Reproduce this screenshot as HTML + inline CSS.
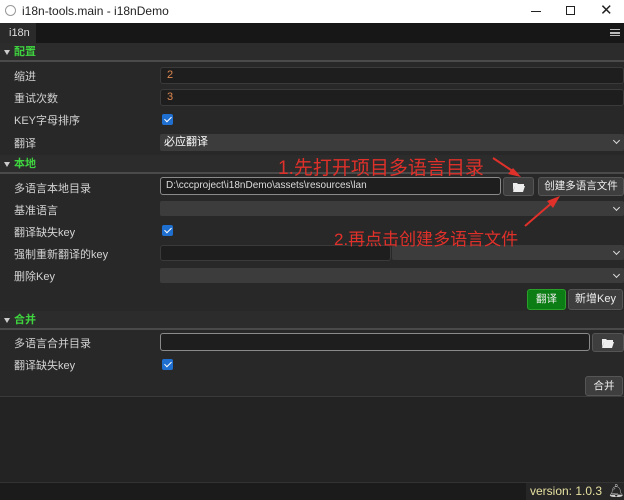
<!DOCTYPE html>
<html><head><meta charset="utf-8"><style>
*{box-sizing:border-box;margin:0;padding:0}
body{width:624px;height:500px;overflow:hidden;background:#282828;font-family:"Liberation Sans","Noto Sans CJK SC",sans-serif;font-size:11px;color:#cfcfcf;position:relative}
.a{position:absolute}
.title{left:0;top:0;width:624px;height:23px;background:#fff;color:#222;font-size:12px}
.tabbar{left:0;top:23px;width:624px;height:20px;background:#171717}
.hdr{left:0;width:624px;height:19px;background:#2c2c2c;border-bottom:2px solid #4a4a4a;color:#3fd43f;font-weight:bold;font-size:11px;padding-left:14px;line-height:18px}
.hdr:before{content:"";position:absolute;left:4px;top:7px;border-left:3px solid transparent;border-right:3px solid transparent;border-top:5px solid #ccc}
.lbl{left:14px;font-size:11px;color:#d2d2d2}
.inp{background:#1e1e1e;border:1px solid #3a3a3a;border-radius:3px;color:#e08850;font-size:11px;padding-left:6px;line-height:15px}
.sel{background:#3c3c3c;border-radius:2px;color:#fff}
.sel:after{content:"";position:absolute;right:5px;top:4px;width:4px;height:4px;border-right:1.5px solid #ddd;border-bottom:1.5px solid #ddd;transform:rotate(45deg)}
.cb{width:11px;height:11px;background:#1e6fd0;border-radius:2px}
.cb:after{content:"";position:absolute;left:3.5px;top:1px;width:3px;height:6px;border-right:1.5px solid #fff;border-bottom:1.5px solid #fff;transform:rotate(45deg)}
.btn{background:#3e3e3e;border:1px solid #555;border-radius:3px;color:#eee;text-align:center;font-size:10.5px}
.red{color:#e0302a}
</style></head><body>
<div class="a title"><span class="a" style="left:5px;top:5px;width:11px;height:11px;border:1px solid #999;border-radius:50%"></span><span class="a" style="left:22px;top:4px">i18n-tools.main - i18nDemo</span>
<span class="a" style="left:531px;top:11px;width:10px;height:1px;background:#222"></span>
<span class="a" style="left:566px;top:6px;width:9px;height:9px;border:1px solid #222"></span>
<span class="a" style="left:600px;top:1px;font-size:15px">✕</span></div>
<div class="a tabbar"><div class="a" style="left:0;top:0;width:36px;height:20px;background:#2a2a2a;color:#ddd;line-height:20px;padding-left:9px">i18n</div>
<div class="a" style="left:610px;top:6px;width:10px;height:7px;border-top:1.5px solid #bbb;border-bottom:1.5px solid #bbb"></div><div class="a" style="left:610px;top:9px;width:10px;height:1.5px;background:#bbb"></div></div>

<div class="a hdr" style="top:43px">配置</div>
<div class="a lbl" style="top:68px">缩进</div><div class="a inp" style="left:160px;top:67px;width:464px;height:17px">2</div>
<div class="a lbl" style="top:90px">重试次数</div><div class="a inp" style="left:160px;top:89px;width:464px;height:17px">3</div>
<div class="a lbl" style="top:112px">KEY字母排序</div><div class="a cb" style="left:162px;top:114px"></div>
<div class="a lbl" style="top:135px">翻译</div><div class="a sel" style="left:160px;top:134px;width:464px;height:17px;padding-left:4px;font-size:11px;line-height:17px">必应翻译</div>

<div class="a hdr" style="top:155px">本地</div>
<div class="a lbl" style="top:180px">多语言本地目录</div><div class="a inp" style="left:160px;top:177px;width:341px;height:18px;border:1px solid #8a8a8a;color:#ddd;font-size:10px;padding-left:5px">D:\cccproject\i18nDemo\assets\resources\lan</div>
<div class="a btn" style="left:503px;top:177px;width:31px;height:19px"><svg width="12" height="10" viewBox="0 0 12 10" style="margin-top:4px"><path d="M0 1h4l1 1h6v2H2L0 9z M2 4h10l-2 6H0z" fill="#eee"/></svg></div>
<div class="a btn" style="left:538px;top:177px;width:86px;height:19px;line-height:17px">创建多语言文件</div>
<div class="a lbl" style="top:202px">基准语言</div><div class="a sel" style="left:160px;top:201px;width:464px;height:15px"></div>
<div class="a lbl" style="top:224px">翻译缺失key</div><div class="a cb" style="left:162px;top:225px"></div>
<div class="a lbl" style="top:246px">强制重新翻译的key</div><div class="a inp" style="left:160px;top:245px;width:231px;height:16px"></div><div class="a sel" style="left:392px;top:245px;width:232px;height:15px"></div>
<div class="a lbl" style="top:268px">删除Key</div><div class="a sel" style="left:160px;top:268px;width:464px;height:15px"></div>
<div class="a btn" style="left:527px;top:289px;width:39px;height:21px;line-height:19px;background:#0c7d14;border-color:#2aa02a">翻译</div>
<div class="a btn" style="left:568px;top:289px;width:55px;height:21px;line-height:19px;font-size:11px">新增Key</div>

<div class="a hdr" style="top:311px">合并</div>
<div class="a lbl" style="top:335px">多语言合并目录</div><div class="a inp" style="left:160px;top:333px;width:430px;height:18px;border:1px solid #8a8a8a"></div>
<div class="a btn" style="left:592px;top:333px;width:32px;height:19px"><svg width="12" height="10" viewBox="0 0 12 10" style="margin-top:4px"><path d="M0 1h4l1 1h6v2H2L0 9z M2 4h10l-2 6H0z" fill="#eee"/></svg></div>
<div class="a lbl" style="top:357px">翻译缺失key</div><div class="a cb" style="left:162px;top:359px"></div>
<div class="a btn" style="left:585px;top:376px;width:38px;height:20px;line-height:18px">合并</div>
<div class="a" style="left:0;top:396px;width:624px;height:86px;background:#232323;border-top:1px solid #3a3a3a"></div>
<div class="a" style="left:0;top:482px;width:624px;height:18px;background:#1b1b1b;border-top:1px solid #333"></div>
<div class="a" style="left:526px;top:483px;width:98px;height:17px;background:#262626"></div>
<div class="a" style="left:530px;top:484px;color:#e6e0a0;font-size:12px">version: 1.0.3</div>
<div class="a" style="left:608px;top:483px;color:#ccc;font-size:13px">🔔︎</div>

<div class="a red" style="left:278px;top:153px;font-size:19px">1.先打开项目多语言目录</div>
<div class="a red" style="left:334px;top:225px;font-size:17px">2.再点击创建多语言文件</div>
<svg class="a" style="left:0;top:0" width="624" height="500"><path d="M493 158L517 174" stroke="#e0302a" stroke-width="2"/><path d="M521 177L508 174L513 168z" fill="#e0302a"/>
<path d="M525 226L554 201" stroke="#e0302a" stroke-width="2"/><path d="M560 196L553 208L547 201z" fill="#e0302a"/></svg>
</body></html>
